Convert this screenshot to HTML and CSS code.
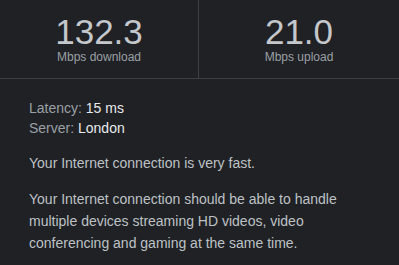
FILE: index.html
```html
<!DOCTYPE html>
<html lang="en">
<head>
    <meta charset="UTF-8">
    <title>Speed test</title>
    <link rel="stylesheet" href="styles.css">
</head>
<body>
    <div class="results">
        <div class="result">
            <div class="value">132.3</div>
            <div class="unit">Mbps download</div>
        </div>
        <div class="result">
            <div class="value">21.0</div>
            <div class="unit">Mbps upload</div>
        </div>
    </div>

    <div class="details">
        <div class="meta">
            <div><span class="label">Latency:</span> <span class="data">15 ms</span></div>
            <div><span class="label">Server:</span> <span class="data">London</span></div>
        </div>
        <p>Your Internet connection is very fast.</p>
        <p>Your Internet connection should be able to handle multiple devices streaming HD videos, video conferencing and gaming at the same time.</p>
    </div>
</body>
</html>
```

FILE: styles.css
```css
body {
    margin: 0;
    background-color: #202124;
    font-family: "Liberation Sans", Arial, sans-serif;
    color: #bdc1c6;
}

.results {
    display: grid;
    grid-template-columns: 199px 1fr;
    border-bottom: 1px solid #3c4043;
}

.result {
    height: 78px;
    display: flex;
    flex-direction: column;
    align-items: center;
    padding-top: 12px;
    box-sizing: border-box;
}

.result:first-child {
    border-right: 1px solid #3c4043;
}

.value {
    font-size: 35px;
    line-height: 39px;
    color: #c4c7cb;
}

.unit {
    font-size: 12px;
    line-height: 12px;
    color: #9aa0a6;
}

.details {
    padding: 19px 29px 0;
    font-size: 14px;
}

.meta {
    line-height: 20px;
}

.label {
    color: #9aa0a6;
}

.data {
    color: #e8eaed;
}

.details p {
    margin: 14px 0 0;
    line-height: 22px;
}
```
